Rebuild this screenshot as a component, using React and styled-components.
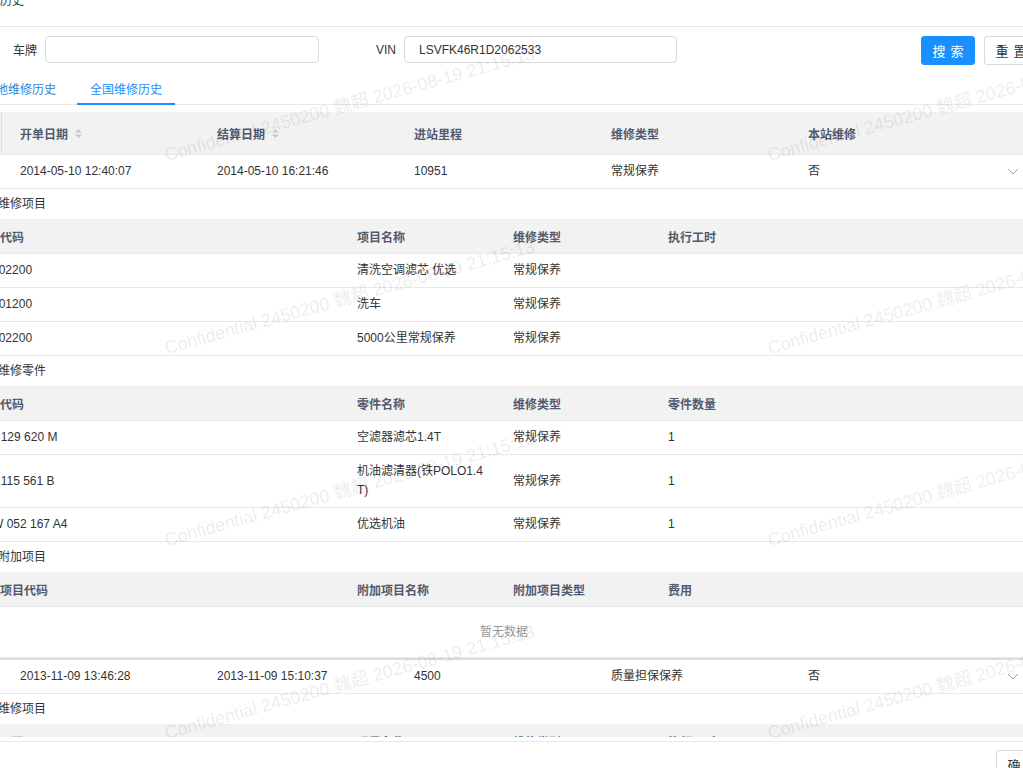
import React from "react";
import styled, { createGlobalStyle } from "styled-components";

const GlobalStyle = createGlobalStyle`
  html, body {
    margin: 0;
    padding: 0;
    background: #fff;
    overflow: hidden;
  }
  body {
    font-family: "Liberation Sans", Arial, "Noto Sans CJK SC", sans-serif;
    font-size: 12px;
    color: #333;
  }
`;

const mainCols = "38px 197px 197px 197px 197px 197px 1fr";
const subCols = "381px 156px 155px 1fr";

const records = [
  {
    openAt: "2014-05-10 12:40:07",
    settleAt: "2014-05-10 16:21:46",
    mileage: "10951",
    type: "常规保养",
    local: "否",
    items: [
      ["SV102200", "清洗空调滤芯 优选", "常规保养", ""],
      ["SV101200", "洗车", "常规保养", ""],
      ["SV102200", "5000公里常规保养", "常规保养", ""],
    ],
    parts: [
      ["04E 129 620 M", "空滤器滤芯1.4T", "常规保养", "1"],
      ["04E 115 561 B", "机油滤清器(铁POLO1.4T)", "常规保养", "1"],
      ["SVW 052 167 A4", "优选机油", "常规保养", "1"],
    ],
    extras: [],
    full: true,
  },
  {
    openAt: "2013-11-09 13:46:28",
    settleAt: "2013-11-09 15:10:37",
    mileage: "4500",
    type: "质量担保保养",
    local: "否",
    items: [["", "", "", ""]],
    parts: [],
    extras: [],
    full: false,
  },
];

const Dialog = styled.div`
  margin-left: -36px;
  width: 1080px;
  display: flex;
  flex-direction: column;
`;

const DialogHead = styled.div`
  height: 26px;
  border-bottom: 1px solid #e8e8e8;
  margin-left: -36px;
  padding-left: 48px;
  margin-right: -60px;
`;

const DialogTitle = styled.div`
  margin-top: -9px;
  line-height: 20px;
  font-size: 12px;
  color: #333;
`;

const DialogBody = styled.div`
  height: 710px;
  overflow: hidden;
`;

const DialogFoot = styled.div`
  margin-top: 4px;
  border-top: 1px solid #e8e8e8;
  margin-right: -60px;
  padding: 8px 54px 0 0;
  display: flex;
  justify-content: flex-end;
`;

const SearchRow = styled.div`
  display: flex;
  align-items: flex-start;
  padding: 9px 6px 0 0;
`;

const Field = styled.div`
  display: flex;
  align-items: center;
  margin-left: ${(p) => p.$offset || 0}px;
`;

const FieldLabel = styled.label`
  width: ${(p) => p.$w}px;
  text-align: right;
  margin-right: 8px;
  color: #333;
`;

const TextInput = styled.input`
  box-sizing: border-box;
  width: ${(p) => p.$w}px;
  height: 27px;
  border: 1px solid #d9d9d9;
  border-radius: 4px;
  padding: 0 14px;
  font: inherit;
  color: #333;
  outline: none;
`;

const Spacer = styled.div`
  flex: 1;
`;

const Button = styled.button`
  box-sizing: border-box;
  width: 54px;
  height: 29px;
  margin-left: ${(p) => (p.$first ? 0 : 9)}px;
  border-radius: 3px;
  border: 1px solid ${(p) => (p.$primary ? "#1890ff" : "#d9d9d9")};
  background: ${(p) => (p.$primary ? "#1890ff" : "#fff")};
  color: ${(p) => (p.$primary ? "#fff" : "#333")};
  font-family: "Noto Sans CJK SC", sans-serif;
  font-size: 13px;
  letter-spacing: 5px;
  text-indent: 5px;
  padding: 0;
  cursor: pointer;
`;

const TabBar = styled.div`
  display: flex;
  margin: 10px -60px 0 -36px;
  padding-left: 43px;
  border-bottom: 1px solid #e8e8e8;
`;

const Tab = styled.div`
  height: 28px;
  line-height: 28px;
  padding: 0 13px;
  margin-right: 8px;
  margin-bottom: -1px;
  color: ${(p) => (p.$active ? "#1890ff" : "#2b85d6")};
  border-bottom: 2px solid ${(p) => (p.$active ? "#1890ff" : "transparent")};
  font-family: "Noto Sans CJK SC", sans-serif;
  cursor: pointer;
`;

const Table = styled.div`
  margin-top: 7px;
`;

const Row = styled.div`
  display: grid;
  grid-template-columns: ${(p) => p.$cols};
  align-items: center;
  min-height: ${(p) => p.$h}px;
  background: ${(p) => (p.$head ? "#f2f2f2" : "#fff")};
  border-bottom: 1px solid #e8e8e8;
`;

const HeadCell = styled.div`
  display: flex;
  align-items: center;
  gap: 6px;
  padding: 0 12px 0 ${(p) => p.$pad ?? 12}px;
  font-family: "Liberation Sans", "Noto Sans CJK SC", sans-serif;
  font-weight: 700;
  color: #515a6e;
  align-self: stretch;
  border-right: ${(p) => (p.$divider ? "1px solid #e0e0e0" : "none")};
`;

const Cell = styled.div`
  padding: 7px 12px 7px ${(p) => p.$pad ?? 12}px;
  line-height: 19px;
  color: #333;
  word-break: break-all;
`;

const ExpandCell = styled.div`
  display: flex;
  justify-content: center;
  padding-right: 6px;
  color: #999;
`;

const Detail = styled.div`
  border-bottom: 2px solid #dcdcdc;
`;

const DetailTitle = styled.div`
  height: 30px;
  line-height: 30px;
  padding-left: 34px;
  color: #333;
`;

const Empty = styled.div`
  height: 50px;
  line-height: 50px;
  text-align: center;
  color: #999;
  border-bottom: 1px solid #e8e8e8;
`;

const Watermarks = styled.div`
  position: fixed;
  inset: 0;
  pointer-events: none;
  overflow: hidden;
`;

const Mark = styled.div`
  position: absolute;
  white-space: nowrap;
  font-size: 18px;
  color: rgba(0, 0, 0, 0.075);
  transform: rotate(-15.5deg);
  transform-origin: left bottom;
`;

const SortCaret = () => (
  <svg width="9" height="11" viewBox="0 0 9 11">
    <path d="M4.5 1 L8 4.5 L1 4.5 Z" fill="#c5c8ce" />
    <path d="M4.5 10 L8 6.5 L1 6.5 Z" fill="#c5c8ce" />
  </svg>
);

const Chevron = () => (
  <svg width="12" height="7" viewBox="0 0 12 7">
    <polyline points="1,1 6,6 11,1" fill="none" stroke="#a0a0a0" strokeWidth="1" />
  </svg>
);

const SubTable = ({ title, heads, rows }) => (
  <>
    <DetailTitle>{title}</DetailTitle>
    <Row $cols={subCols} $h={34} $head>
      {heads.map((h) => (
        <HeadCell key={h}>{h}</HeadCell>
      ))}
    </Row>
    {rows.length === 0 && <Empty>暂无数据</Empty>}
    {rows.map((r, i) => (
      <Row key={i} $cols={subCols} $h={33}>
        {r.map((c, j) => (
          <Cell key={j}>{c}</Cell>
        ))}
      </Row>
    ))}
  </>
);

const markSpots = [];
[140, 333, 525, 718].forEach((top) => {
  [168, 771].forEach((left) => markSpots.push({ left, top }));
});

const App = () => {
  return (
    <>
      <GlobalStyle />
      <Dialog>
        <DialogHead>
          <DialogTitle>维修历史</DialogTitle>
        </DialogHead>
        <DialogBody>
          <SearchRow>
            <Field>
              <FieldLabel $w={73}>车牌</FieldLabel>
              <TextInput $w={274} />
            </Field>
            <Field $offset={17}>
              <FieldLabel $w={60}>VIN</FieldLabel>
              <TextInput $w={273} defaultValue="LSVFK46R1D2062533" />
            </Field>
            <Spacer />
            <Button $primary $first>
              搜索
            </Button>
            <Button>重置</Button>
          </SearchRow>

          <TabBar>
            <Tab>本地维修历史</Tab>
            <Tab $active>全国维修历史</Tab>
          </TabBar>

          <Table>
            <Row $cols={mainCols} $h={42} $head>
              <HeadCell $divider />
              <HeadCell $pad={18}>
                开单日期 <SortCaret />
              </HeadCell>
              <HeadCell $pad={18}>
                结算日期 <SortCaret />
              </HeadCell>
              <HeadCell $pad={18}>进站里程</HeadCell>
              <HeadCell $pad={18}>维修类型</HeadCell>
              <HeadCell $pad={18}>本站维修</HeadCell>
              <HeadCell />
            </Row>

            {records.map((rec) => (
              <React.Fragment key={rec.openAt}>
                <Row $cols={mainCols} $h={33}>
                  <Cell />
                  <Cell $pad={18}>{rec.openAt}</Cell>
                  <Cell $pad={18}>{rec.settleAt}</Cell>
                  <Cell $pad={18}>{rec.mileage}</Cell>
                  <Cell $pad={18}>{rec.type}</Cell>
                  <Cell $pad={18}>{rec.local}</Cell>
                  <ExpandCell>
                    <Chevron />
                  </ExpandCell>
                </Row>
                <Detail>
                  <SubTable
                    title="维修项目"
                    heads={["项目代码", "项目名称", "维修类型", "执行工时"]}
                    rows={rec.items}
                  />
                  {rec.full && (
                    <>
                      <SubTable
                        title="维修零件"
                        heads={["零件代码", "零件名称", "维修类型", "零件数量"]}
                        rows={rec.parts}
                      />
                      <SubTable
                        title="附加项目"
                        heads={["附加项目代码", "附加项目名称", "附加项目类型", "费用"]}
                        rows={rec.extras}
                      />
                    </>
                  )}
                </Detail>
              </React.Fragment>
            ))}
          </Table>
        </DialogBody>
        <DialogFoot>
          <Button>确定</Button>
        </DialogFoot>
      </Dialog>

      <Watermarks>
        {markSpots.map((s, i) => (
          <Mark key={i} style={{ left: s.left, top: s.top }}>
            Confidential 2450200 魏超 2026-08-19 21:15:13
          </Mark>
        ))}
      </Watermarks>
    </>
  );
};

export default App;
